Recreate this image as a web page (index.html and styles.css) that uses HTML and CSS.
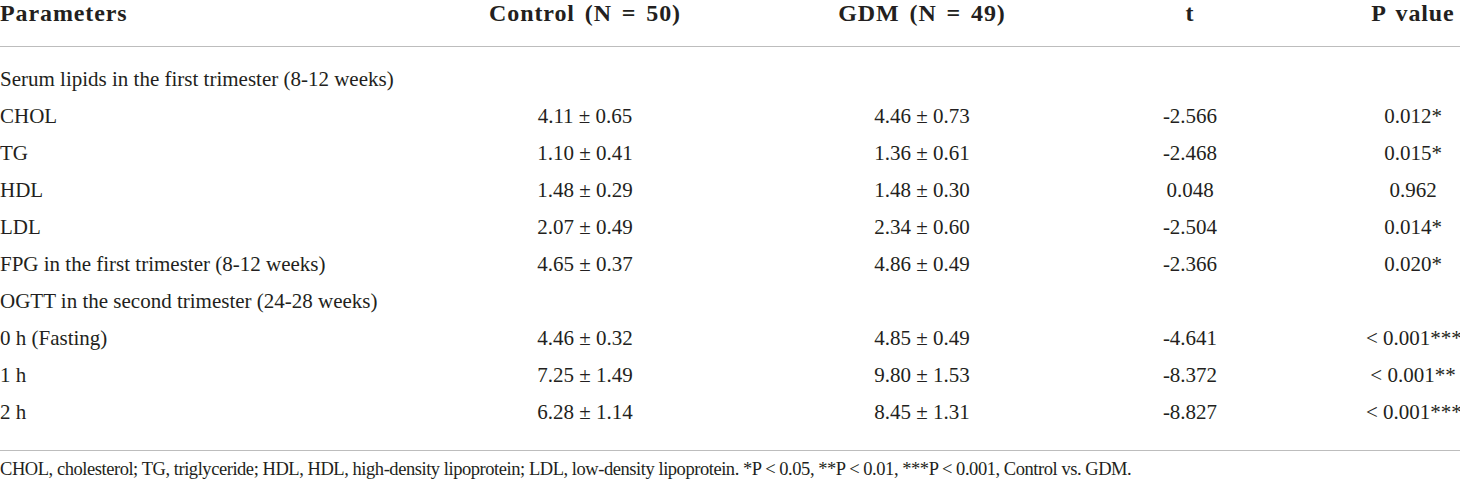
FILE: index.html
```html
<!DOCTYPE html>
<html lang="en">
<head>
    <meta charset="UTF-8">
    <title>Serum lipids and glucose</title>
    <link rel="stylesheet" href="styles.css">
</head>
<body>
    <table class="tabla">
        <colgroup>
            <col class="c-param">
            <col class="c-control">
            <col class="c-gdm">
            <col class="c-t">
            <col class="c-p">
        </colgroup>
        <thead>
            <tr>
                <th class="izq">Parameters</th>
                <th>Control (N = 50)</th>
                <th>GDM (N = 49)</th>
                <th>t</th>
                <th>P value</th>
            </tr>
        </thead>
        <tbody>
            <tr class="primera"><td class="izq" colspan="5">Serum lipids in the first trimester (8-12 weeks)</td></tr>
            <tr><td class="izq">CHOL</td><td>4.11 ± 0.65</td><td>4.46 ± 0.73</td><td>-2.566</td><td>0.012*</td></tr>
            <tr><td class="izq">TG</td><td>1.10 ± 0.41</td><td>1.36 ± 0.61</td><td>-2.468</td><td>0.015*</td></tr>
            <tr><td class="izq">HDL</td><td>1.48 ± 0.29</td><td>1.48 ± 0.30</td><td>0.048</td><td>0.962</td></tr>
            <tr><td class="izq">LDL</td><td>2.07 ± 0.49</td><td>2.34 ± 0.60</td><td>-2.504</td><td>0.014*</td></tr>
            <tr><td class="izq">FPG in the first trimester (8-12 weeks)</td><td>4.65 ± 0.37</td><td>4.86 ± 0.49</td><td>-2.366</td><td>0.020*</td></tr>
            <tr><td class="izq" colspan="5">OGTT in the second trimester (24-28 weeks)</td></tr>
            <tr><td class="izq">0 h (Fasting)</td><td>4.46 ± 0.32</td><td>4.85 ± 0.49</td><td>-4.641</td><td>&lt; 0.001***</td></tr>
            <tr><td class="izq">1 h</td><td>7.25 ± 1.49</td><td>9.80 ± 1.53</td><td>-8.372</td><td>&lt; 0.001**</td></tr>
            <tr class="ultima"><td class="izq">2 h</td><td>6.28 ± 1.14</td><td>8.45 ± 1.31</td><td>-8.827</td><td>&lt; 0.001***</td></tr>
        </tbody>
    </table>
    <p class="nota">CHOL, cholesterol; TG, triglyceride; HDL, HDL, high-density lipoprotein; LDL, low-density lipoprotein. *P &lt; 0.05, **P &lt; 0.01, ***P &lt; 0.001, Control vs. GDM.</p>
</body>
</html>
```

FILE: styles.css
```css
body {
    font-family: "Liberation Serif", "Times New Roman", serif;
    margin: 0;
    background-color: #ffffff;
    color: #231f20;
    width: 1460px;
}
.tabla {
    width: 1460px;
    border-collapse: collapse;
    table-layout: fixed;
}
.c-param {
    width: 340px;
}
.c-control {
    width: 490px;
}
.c-gdm {
    width: 184px;
}
.c-t {
    width: 352px;
}
.c-p {
    width: 94px;
}
th {
    font-size: 24px;
    letter-spacing: 0.9px;
    word-spacing: 3px;
    font-weight: bold;
    line-height: 27px;
    padding: 0 0 19px 0;
    text-align: center;
    white-space: nowrap;
    border-bottom: 1px solid #bdbdbd;
}
td {
    font-size: 21px;
    line-height: 37px;
    padding: 0;
    text-align: center;
    white-space: nowrap;
}
.izq {
    text-align: left;
}
.primera td {
    padding-top: 14px;
}
.ultima td {
    padding-bottom: 19px;
    border-bottom: 1px solid #bdbdbd;
}
.nota {
    font-size: 18.5px;
    letter-spacing: -0.45px;
    line-height: 24px;
    margin: 6px 0 0 0;
    white-space: nowrap;
}
```
